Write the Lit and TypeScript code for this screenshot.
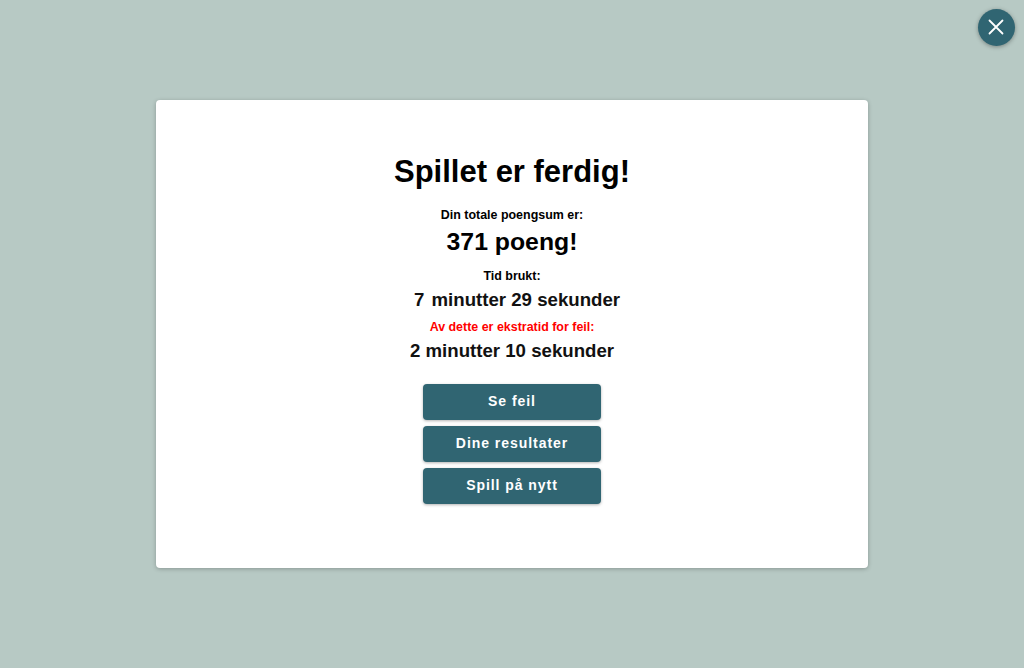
import { LitElement, html, css } from "lit";
import { customElement } from "lit/decorators.js";

@customElement("app-root")
export class AppRoot extends LitElement {
  static styles = css`
    :host {
      display: flex;
      position: relative;
      width: 1024px;
      height: 668px;
      align-items: flex-start;
      justify-content: center;
      background: #b7c9c4;
      font-family: "Liberation Sans", Arial, sans-serif;
      color: #000;
      overflow: hidden;
    }
    .close {
      position: absolute;
      left: 978px;
      top: 9px;
      width: 37px;
      height: 37px;
      border: 0;
      padding: 0 1px 1px 0;
      border-radius: 50%;
      background: #306572;
      box-shadow: 0 1px 4px rgba(0, 0, 0, 0.35);
      display: flex;
      align-items: center;
      justify-content: center;
    }
    .card {
      box-sizing: border-box;
      width: 712px;
      height: 468px;
      margin-top: 100px;
      background: #fff;
      border-radius: 4px;
      box-shadow: 0 1px 4px rgba(0, 0, 0, 0.25);
      padding-top: 53px;
      display: flex;
      flex-direction: column;
      align-items: center;
    }
    h1 {
      margin: 0;
      font-size: 31px;
      line-height: 38px;
      font-weight: 700;
    }
    .small {
      font-size: 12.45px;
      line-height: 14px;
      font-weight: 700;
    }
    .big {
      font-size: 24.8px;
      line-height: 28px;
      font-weight: 700;
    }
    .mid {
      font-size: 18.65px;
      line-height: 21px;
      font-weight: 700;
      color: #111;
    }
    .offset {
      padding-left: 10px;
    }
    .lead {
      margin-right: 2px;
    }
    .red { color: #f00; }
    .s1 { margin-top: 17px; }
    .s2 { margin-top: 6px; }
    .s3 { margin-top: 13px; }
    .s4 { margin-top: 6px; }
    .s5 { margin-top: 10px; }
    .s6 { margin-top: 6px; }
    .btns {
      margin-top: 23px;
      display: flex;
      flex-direction: column;
      gap: 6px;
    }
    .btn {
      width: 178px;
      height: 36px;
      border: 0;
      border-radius: 4px;
      background: #306572;
      color: #fff;
      font: 700 14px "Liberation Sans", Arial, sans-serif;
      letter-spacing: 0.95px;
      box-shadow: 0 1px 3px rgba(0, 0, 0, 0.3);
      padding: 0 0 2px;
    }
  `;

  render() {
    return html`
      <button class="close" aria-label="Lukk">
        <svg width="18" height="18" viewBox="0 0 18 18" fill="none" stroke="#fff" stroke-width="1.8" stroke-linecap="round">
          <path d="M2.5 2.5 15.5 15.5M15.5 2.5 2.5 15.5"></path>
        </svg>
      </button>
      <main class="card">
        <h1>Spillet er ferdig!</h1>
        <div class="small s1">Din totale poengsum er:</div>
        <div class="big s2">371 poeng!</div>
        <div class="small s3">Tid brukt:</div>
        <div class="mid s4 offset"><span class="lead">7</span> minutter 29 sekunder</div>
        <div class="small red s5">Av dette er ekstratid for feil:</div>
        <div class="mid s6">2 minutter 10 sekunder</div>
        <div class="btns">
          <button class="btn">Se feil</button>
          <button class="btn">Dine resultater</button>
          <button class="btn">Spill på nytt</button>
        </div>
      </main>
    `;
  }
}
